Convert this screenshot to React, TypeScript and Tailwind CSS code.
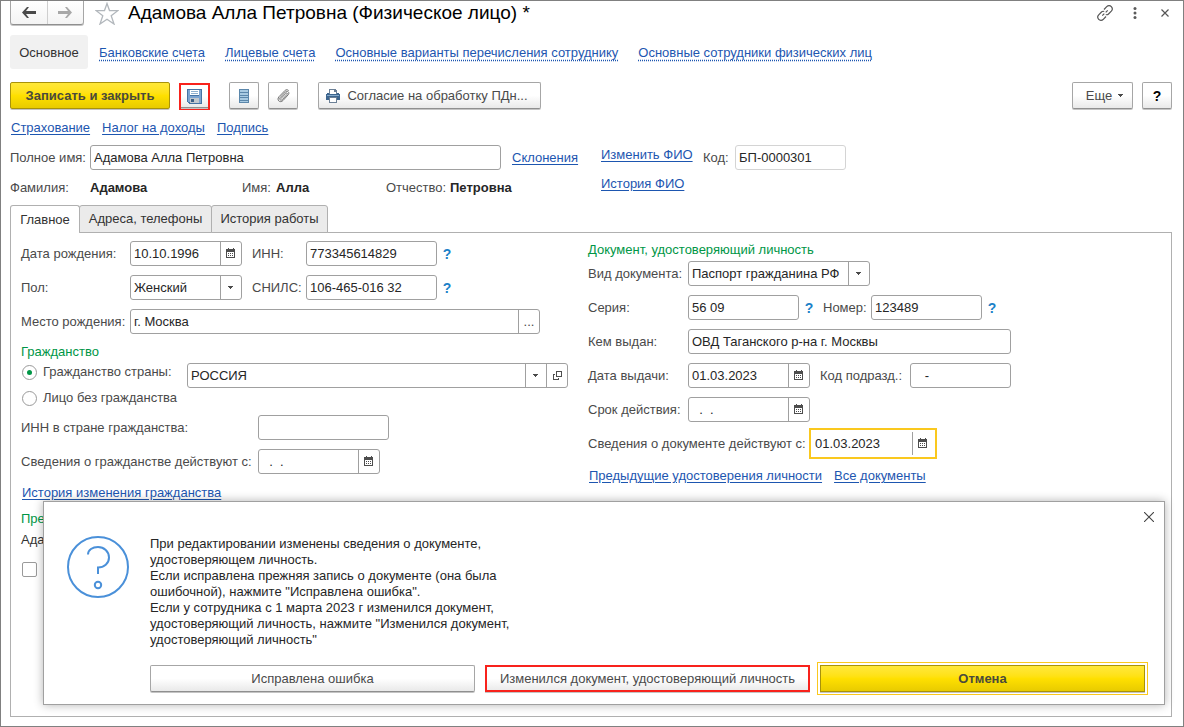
import React, { useId } from 'react';

const BTN =
  'flex h-[27px] shrink-0 items-center justify-center border border-[#a6a6a6] border-b-[#8f8f8f] bg-linear-to-b from-white via-white to-[#e9e9e9] text-[#4a4a4a] shadow-[0_1px_0_#c4c4c4]';
const YELLOW =
  'flex h-[27px] items-center justify-center border border-[#a8920a] bg-linear-to-b from-[#ffe838] via-[#ffe000] to-[#e8cb00] font-bold text-[#4a4a3c] shadow-[0_1px_0_#c4c4c4]';
const BOX = 'flex h-[25px] shrink-0 rounded-[3px] border border-[#a0a0a0] bg-white';
const LINK = 'whitespace-nowrap text-[#1d56b0] underline underline-offset-2';
const CELL = 'flex w-[21px] shrink-0 items-center justify-center border-l border-[#a0a0a0]';

function Caret() {
  return (
    <svg width="5" height="3" viewBox="0 0 5 3" shapeRendering="crispEdges" fill="#4a4a4a">
      <path d="M0 0h5v1H0zM1 1h3v1H1zM2 2h1v1H2z" />
    </svg>
  );
}

function CalendarIcon() {
  return (
    <svg width="10" height="11" viewBox="0 0 10 11" shapeRendering="crispEdges" fill="#4d4d4d">
      <path d="M2 0h1v1h4V0h1v1h1v9H0V1h2zM1 4v5h7V4z" fillRule="evenodd" />
      <path d="M2 5h1v1H2zM4 5h1v1H4zM6 5h1v1H6zM2 7h1v1H2zM4 7h1v1H4zM6 7h1v1H6z" />
    </svg>
  );
}

function OpenIcon() {
  return (
    <svg width="9" height="9" viewBox="0 0 9 9" fill="none" stroke="#4d4d4d" shapeRendering="crispEdges">
      <path d="M3.5 0.5h5v5h-5zM2 3.5H.5v5h5V7" />
    </svg>
  );
}

function Text({ label, value, className = '' }: { label: string; value: string; className?: string }) {
  return (
    <div className={`${BOX} ${className}`}>
      <input aria-label={label} defaultValue={value} className="w-full min-w-0 bg-transparent px-[3px] text-[#262626] outline-none" />
    </div>
  );
}

function DateBox({ label, value, className = '' }: { label: string; value: string; className?: string }) {
  return (
    <div className={`${BOX} ${className}`}>
      <input aria-label={label} defaultValue={value} className="min-w-0 flex-1 bg-transparent px-[3px] text-[#262626] outline-none" />
      <button aria-label="Выбрать дату" className={CELL}>
        <CalendarIcon />
      </button>
    </div>
  );
}

function SelectBox({ label, value, className = '', children }: { label: string; value: string; className?: string; children?: React.ReactNode }) {
  return (
    <div className={`${BOX} ${className}`}>
      <div className="relative flex min-w-0 flex-1">
        <select aria-label={label} className="w-full appearance-none bg-transparent pr-[21px] pl-[3px] text-[#262626] outline-none">
          <option>{value}</option>
        </select>
        <span className={`${CELL} pointer-events-none absolute inset-y-0 right-0 pr-px`}>
          <Caret />
        </span>
      </div>
      {children}
    </div>
  );
}

function Help() {
  return <button aria-label="Справка" className="w-[20px] shrink-0 text-[14px] font-bold text-[#1c82c8]">?</button>;
}

function Radio({ label, checked }: { label: string; checked?: boolean }) {
  const id = useId();
  return (
    <div className="flex h-4 items-center gap-[6px] pl-px">
      <input
        id={id}
        type="radio"
        name="citizenship"
        defaultChecked={checked}
        className="flex size-[15px] shrink-0 appearance-none items-center justify-center rounded-full border border-[#9a9a9a] before:size-[5px] before:rounded-full checked:before:bg-[#009646]"
      />
      <label htmlFor={id} className="whitespace-nowrap">{label}</label>
    </div>
  );
}

const NAV = ['Банковские счета', 'Лицевые счета', 'Основные варианты перечисления сотруднику', 'Основные сотрудники физических лиц'];

export default function App() {
  return (
    <div className="relative flex min-h-screen flex-col overflow-hidden border border-[#808080] bg-white pr-[11px] pb-[9px] pl-[9px] font-['Liberation_Sans',Arial,sans-serif] text-[13px] leading-4 text-[#4a4a4a]">
      <header className="flex h-[24px] items-center">
        <div className="flex h-[24px] w-[74px] rounded-b-[3px] border border-t-0 border-[#a6a6a6] border-b-[#8f8f8f] bg-linear-to-b from-white to-[#f4f4f4] shadow-[0_1px_0_#c4c4c4]">
          <button aria-label="Назад" className="flex flex-1 items-center justify-center border-r border-[#cfcfcf]">
            <svg width="14" height="11" viewBox="0 0 14 11" fill="#4a4a4a"><path d="M0 5.500 5 0h2L4 4h10v3H4l3 4H5z" /></svg>
          </button>
          <button aria-label="Вперед" className="flex flex-1 items-center justify-center">
            <svg width="14" height="11" viewBox="0 0 14 11" fill="#a8a8a8"><path d="M14 5.500 9 0H7l3 4H0v3h10l-3 4h2z" /></svg>
          </button>
        </div>
        <button aria-label="В избранное" className="ml-[11px]">
          <svg width="24" height="23" viewBox="0 0 24 23" fill="none" stroke="#b2b7bc" strokeWidth="1.300"><path d="M12 1.500 14.500 8.500 22.800 8.700 16.200 13.700 19 22 12 17.200 5 22 7.800 13.700 1.200 8.700 9.500 8.500z" /></svg>
        </button>
        <h1 className="ml-[9px] flex-1 text-[19px] whitespace-nowrap text-black">Адамова Алла Петровна (Физическое лицо) *</h1>
        <button aria-label="Получить ссылку" className="mr-[20px]">
          <svg width="16" height="16" viewBox="0 0 16 16" fill="none" stroke="#555" strokeWidth="1.200"><path d="M7 4.500 9.700 1.700C11.200.200 13.200.5 14.300 1.700c1.200 1.300 1.300 3.100 0 4.500L11.500 9c-.8.8-1.800.9-2.700.5M9 11.500l-2.700 2.800c-1.500 1.500-3.500 1.200-4.600 0-1.200-1.300-1.300-3.100 0-4.500L4.500 7c.8-.8 1.800-.9 2.700-.5M5.300 10.700l2-2M8.700 7.300l2-2" /></svg>
        </button>
        <button aria-label="Меню" className="mr-[24px]">
          <svg width="4" height="12" viewBox="0 0 4 12" fill="#5a5a5a"><circle cx="2" cy="1.500" r="1.500" /><circle cx="2" cy="6" r="1.500" /><circle cx="2" cy="10.500" r="1.500" /></svg>
        </button>
        <button aria-label="Закрыть" className="mr-[3px]">
          <svg width="8" height="8" viewBox="0 0 8 8" stroke="#555" strokeWidth="1.200"><path d="M.5.5l7 7M7.500.5l-7 7" /></svg>
        </button>
      </header>

      <nav className="mt-[10px] flex items-center gap-[20px]">
        <button className="mr-[-9px] h-[34px] w-[78px] rounded-[3px] bg-[#f1f1f1] pt-px text-[#333]">Основное</button>
        {NAV.map((n) => (
          <a key={n} href="#" className="pt-px whitespace-nowrap text-[#1d56b0] underline decoration-dotted underline-offset-[3px]">{n}</a>
        ))}
      </nav>

      <div className="mt-[13px] flex">
        <button className={`${YELLOW} w-[160px] rounded-[2px]`}>Записать и закрыть</button>
        <div className="ml-[9px] border-2 border-[#f8221c] -mb-px mt-px">
          <button aria-label="Записать" className={`${BTN} !h-[23px] w-[27px] !border-x-0 !border-t-0`}>
            <svg width="15" height="15" viewBox="0 0 15 15" shapeRendering="crispEdges">
              <path fill="#4673a3" d="M0 0h15v15H2v-1H1v-1H0z" />
              <path fill="#7ba3d0" d="M1 1h2v12H1zM12 1h2v13h-2z" />
              <path fill="#7ba3d0" d="M3 7h9v2H3z" />
              <path fill="#fff" d="M3 1h9v5H3z" />
              <path fill="#8fb0cf" d="M4 2h7v1H4zM4 4h7v1H4z" />
              <path fill="#c2c8ce" d="M3 9h9v5H3z" />
              <path fill="#3c5f86" d="M4 10h3v3H4z" />
            </svg>
          </button>
        </div>
        <button aria-label="Список" className={`${BTN} ml-[19px] w-[30px] rounded-[2px]`}>
          <svg width="10" height="14" viewBox="0 0 10 14" shapeRendering="crispEdges">
            <path fill="#5b87ab" d="M0 0h10v14H0z" />
            <path fill="#a9cbe2" d="M1 1h8v2H1zM1 4h8v2H1zM1 7h8v1H1zM1 9h8v2H1zM1 12h8v1H1z" />
          </svg>
        </button>
        <button aria-label="Файлы" className={`${BTN} ml-[9px] w-[30px] rounded-[2px]`}>
          <svg width="13" height="14" viewBox="0 0 13 14" fill="none" stroke="#707070" strokeWidth="1" strokeLinecap="round"><path d="M4 9.500 9 4.200c.8-.8 1.900.2 1.100 1.100L5.300 10.600c-1.500 1.500-3.600-.4-2.200-2L8.300 3c2-2 4.800.5 3 2.700L6 11.500c-3 3-6.800-.5-4-3.800L8.200 1.300c.8-.8 2.200-.9 3.200 0" /></svg>
        </button>
        <button className={`${BTN} ml-5 w-[223px] gap-[7px] rounded-[2px] pr-[5px]`}>
          <svg width="14" height="14" viewBox="0 0 14 14" shapeRendering="crispEdges">
            <path fill="#6c8096" d="M3 0h6l2 2v3H3z" />
            <path fill="#fff" d="M4 1h4v2h2v2H4z" />
            <path fill="#3d668f" d="M1 4h2v1h8V4h2v1h1v6H0V5h1z" />
            <path fill="#86aacb" d="M1 6h12v1H1z" />
            <path fill="#6c8096" d="M3 8h8v6H3z" />
            <path fill="#fff" d="M4 9h6v4H4z" />
          </svg>
          Согласие на обработку ПДн...
        </button>
        <button className={`${BTN} ml-auto w-[61px] gap-[6px] rounded-[2px] pl-1`}>Еще <Caret /></button>
        <button className={`${BTN} ml-[9px] w-[30px] rounded-[2px] text-[14px] font-bold !text-black`}>?</button>
      </div>

      <div className="mt-[11px] flex gap-3 pl-px">
        <a href="#" className={LINK}>Страхование</a>
        <a href="#" className={LINK}>Налог на доходы</a>
        <a href="#" className={LINK}>Подпись</a>
      </div>

      <div className="mt-[9px] flex items-start">
        <div className="w-[591px] shrink-0">
          <div className="flex items-center">
            <span className="w-20 whitespace-nowrap">Полное имя:</span>
            <Text label="Полное имя" value="Адамова Алла Петровна" className="w-[411px]" />
            <a href="#" className={`${LINK} ml-[11px]`}>Склонения</a>
          </div>
          <div className="mt-[10px] flex">
            <span className="w-20">Фамилия:</span>
            <b className="w-[152px] text-[#262626]">Адамова</b>
            <span className="w-[34px]">Имя:</span>
            <b className="w-[110px] text-[#262626]">Алла</b>
            <span className="w-16">Отчество:</span>
            <b className="text-[#262626]">Петровна</b>
          </div>
        </div>
        <div className="flex w-[102px] flex-col items-start gap-[13px] pt-[2px]">
          <a href="#" className={LINK}>Изменить ФИО</a>
          <a href="#" className={LINK}>История ФИО</a>
        </div>
        <div className="flex items-center">
          <span className="w-8">Код:</span>
          <Text label="Код" value="БП-0000301" className="w-[111px] !border-[#d4d4d4]" />
        </div>
      </div>

      <div role="tablist" className="z-10 mt-[9px] -mb-px flex">
        <button role="tab" aria-selected="true" className="h-[28px] w-[70px] rounded-t-[3px] border border-b-0 border-[#b0b0b0] bg-white text-[#333]">Главное</button>
        <button role="tab" className="-ml-px h-[28px] w-[133px] rounded-t-[3px] border border-[#b0b0b0] bg-[#ebebeb] text-[#333]">Адреса, телефоны</button>
        <button role="tab" className="-ml-px h-[28px] w-[117px] rounded-t-[3px] border border-[#b0b0b0] bg-[#ebebeb] text-[#333]">История работы</button>
      </div>

      <main className="flex flex-1 items-start border border-[#b0b0b0] px-[10px] pt-2">
        <section className="flex w-[567px] shrink-0 flex-col">
          <div className="flex flex-col gap-[9px]">
            <div className="flex items-center">
              <span className="w-[109px] whitespace-nowrap">Дата рождения:</span>
              <DateBox label="Дата рождения" value="10.10.1996" className="w-[112px]" />
              <span className="ml-[10px] w-[54px]">ИНН:</span>
              <Text label="ИНН" value="773345614829" className="w-[131px]" />
              <Help />
            </div>
            <div className="flex items-center">
              <span className="w-[109px]">Пол:</span>
              <SelectBox label="Пол" value="Женский" className="w-[112px]" />
              <span className="ml-[10px] w-[54px]">СНИЛС:</span>
              <Text label="СНИЛС" value="106-465-016 32" className="w-[131px]" />
              <Help />
            </div>
            <div className="flex items-center">
              <span className="w-[109px] whitespace-nowrap">Место рождения:</span>
              <div className={`${BOX} w-[410px]`}>
                <input aria-label="Место рождения" defaultValue="г. Москва" className="min-w-0 flex-1 px-[3px] text-[#262626] outline-none" />
                <button aria-label="Выбрать место" className={CELL}>...</button>
              </div>
            </div>
          </div>
          <h2 className="mt-[10px] text-[#009646]">Гражданство</h2>
          <div className="mt-[3px] flex items-start">
            <div className="flex w-[166px] flex-col gap-[10px] pt-px">
              <Radio label="Гражданство страны:" checked />
              <Radio label="Лицо без гражданства" />
            </div>
            <SelectBox label="Страна" value="РОССИЯ" className="w-[381px]">
              <button aria-label="Открыть" className={CELL}><OpenIcon /></button>
            </SelectBox>
          </div>
          <div className="mt-[9px] flex flex-col gap-[9px]">
            <div className="flex items-center">
              <span className="w-[237px]">ИНН в стране гражданства:</span>
              <Text label="ИНН в стране гражданства" value="" className="w-[131px]" />
            </div>
            <div className="flex items-center">
              <span className="w-[237px] whitespace-nowrap">Сведения о гражданстве действуют с:</span>
              <DateBox label="Сведения о гражданстве действуют с" value="  .  ." className="w-[122px]" />
            </div>
          </div>
          <a href="#" className={`${LINK} mt-[11px] ml-px self-start`}>История изменения гражданства</a>
          <h2 className="mt-[10px] text-[#009646]">Представление</h2>
          <div className="mt-[5px] text-[#333]">Адамова</div>
          <input type="checkbox" aria-label="Дополнительно" className="mt-[14px] ml-px size-[15px] appearance-none rounded-[2px] border border-[#9a9a9a]" />
        </section>

        <section className="flex flex-1 flex-col">
          <h2 className="pt-px text-[#009646]">Документ, удостоверяющий личность</h2>
          <div className="mt-[3px] flex flex-col gap-[9px]">
            <div className="flex items-center">
              <span className="w-[100px] whitespace-nowrap">Вид документа:</span>
              <SelectBox label="Вид документа" value="Паспорт гражданина РФ" className="w-[182px]" />
            </div>
            <div className="flex items-center">
              <span className="w-[100px]">Серия:</span>
              <Text label="Серия" value="56 09" className="w-[111px]" />
              <Help />
              <span className="ml-1 w-[48px]">Номер:</span>
              <Text label="Номер" value="123489" className="w-[111px]" />
              <Help />
            </div>
            <div className="flex items-center">
              <span className="w-[100px]">Кем выдан:</span>
              <Text label="Кем выдан" value="ОВД Таганского р-на г. Москвы" className="w-[323px]" />
            </div>
            <div className="flex items-center">
              <span className="w-[100px]">Дата выдачи:</span>
              <DateBox label="Дата выдачи" value="01.03.2023" className="w-[122px]" />
              <span className="ml-[10px] w-[90px] whitespace-nowrap">Код подразд.:</span>
              <Text label="Код подразделения" value="   -" className="w-[101px]" />
            </div>
            <div className="flex items-center">
              <span className="w-[100px]">Срок действия:</span>
              <DateBox label="Срок действия" value="  .  ." className="w-[122px]" />
            </div>
          </div>
          <div className="mt-[6px] flex items-center">
            <span className="w-[221px] whitespace-nowrap">Сведения о документе действуют с:</span>
            <div className="flex h-[31px] w-[128px] border-2 border-[#fac81e] py-[2px] pr-[2px] pl-[3px]">
              <input aria-label="Сведения о документе действуют с" defaultValue="01.03.2023" className="min-w-0 flex-1 px-px text-[#262626] outline-none" />
              <button aria-label="Выбрать дату" className={CELL}><CalendarIcon /></button>
            </div>
          </div>
          <div className="mt-[9px] flex gap-3 pl-px">
            <a href="#" className={LINK}>Предыдущие удостоверения личности</a>
            <a href="#" className={LINK}>Все документы</a>
          </div>
        </section>
      </main>

      <div role="dialog" aria-label="Вопрос" className="absolute right-[18px] bottom-[21px] left-[42px] z-20 border border-[#a0a0a0] bg-white pt-[34px] pr-[19px] pb-[12px] pl-[106px] text-[#262626] shadow-[0_0_9px_rgba(0,0,0,0.3)]">
        <button aria-label="Закрыть" className="absolute top-[10px] right-[10px]">
          <svg width="10" height="10" viewBox="0 0 10 10" stroke="#444" strokeWidth="1.100"><path d="M0 0l10 10M10 0 0 10" /></svg>
        </button>
        <svg className="absolute top-[34px] left-[23px]" width="62" height="62" viewBox="0 0 62 62" fill="none" stroke="#4a90d9" strokeWidth="2">
          <circle cx="31" cy="31" r="30" />
          <path d="M21 18.500c0-4.500 4.500-7.500 10-7.500 6 0 11 4.500 11 10.500S37 31.500 31 31.500V38" />
          <circle cx="31" cy="49" r="3.200" />
        </svg>
        <p className="w-[370px]">
          При редактировании изменены сведения о документе,<br />
          удостоверяющем личность.<br />
          Если исправлена прежняя запись о документе (она была<br />
          ошибочной), нажмите "Исправлена ошибка".<br />
          Если у сотрудника с 1 марта 2023 г изменился документ,<br />
          удостоверяющий личность, нажмите "Изменился документ,<br />
          удостоверяющий личность"
        </p>
        <div className="mt-[17px] grid grid-cols-3 gap-[10px]">
          <button className={`${BTN} rounded-[2px]`}>Исправлена ошибка</button>
          <button className={`${BTN} outline-2 -outline-offset-2 outline-[#f8221c]`}>Изменился документ, удостоверяющий личность</button>
          <button className={`${YELLOW} outline-1 outline-offset-2 outline-[#fac81e]`}>Отмена</button>
        </div>
      </div>
    </div>
  );
}
